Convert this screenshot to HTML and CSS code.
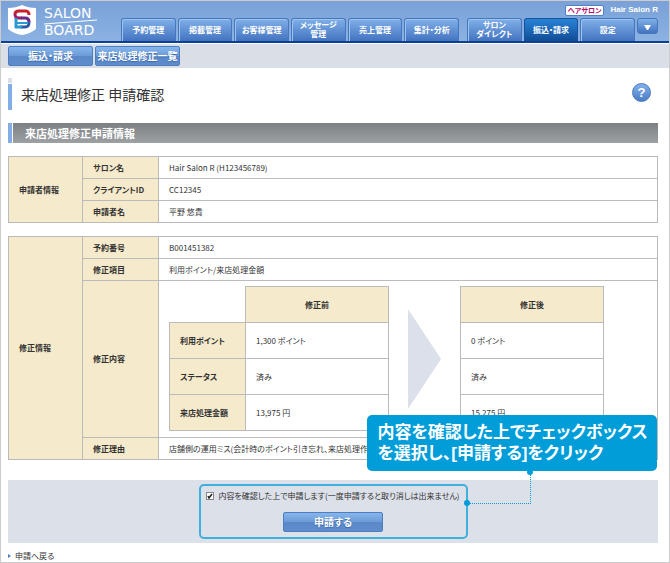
FILE: index.html
```
<!DOCTYPE html>
<html lang="ja">

<head>
    <meta charset="UTF-8">
    <meta name="viewport" content="width=device-width, initial-scale=1.0">
    <title>来店処理修正 申請確認 | SALON BOARD</title>
    <link rel="stylesheet" href="styles.css">
</head>

<body>
    <div class="page">
        <header class="header">
            <a class="logo" href="#">
                <svg class="logo-mark" width="28" height="31" viewBox="0 0 28 31" aria-hidden="true">
                    <path d="M0 3 Q8 3 14 0 Q20 3 28 3 V24 Q22 29 14 30 Q6 29 0 24 Z" fill="#fff" />
                    <g fill="none" stroke-width="3">
                        <path d="M21 10 C21 6 19 6 17 6 H11 C8 6 7 7 7 9" stroke="#c8202c" />
                        <path d="M7 9 C7 12 8 13 11 13 H14" stroke="#9c2068" />
                        <path d="M8 13 V23" stroke="#2a9bd2" />
                        <path d="M13 13 H17 C20 13 21 15 21 17" stroke="#6b2c86" />
                        <path d="M21 17 C21 21 20 22 17 22 H12" stroke="#2f56a8" />
                        <path d="M14 22 H7" stroke="#2a9bd2" />
                        <path d="M8 18 H20" stroke="#2a9bd2" stroke-width="2" />
                    </g>
                </svg>
                <span class="logo-text">
                    <span>SALON</span>
                    <svg width="53" height="6" viewBox="0 0 53 6" aria-hidden="true">
                        <path d="M0 5 L53 1" stroke="#fff" stroke-width="1" />
                    </svg>
                    <span>BOARD</span>
                </span>
            </a>
            <div class="header-main">
                <div class="account">
                    <span class="badge">ヘアサロン</span>
                    <span class="salon">Hair Salon R</span>
                </div>
                <nav class="tabs">
                    <a href="#">予約管理</a>
                    <a href="#">掲載管理</a>
                    <a href="#">お客様管理</a>
                    <a href="#">メッセージ<br>管理</a>
                    <a href="#">売上管理</a>
                    <a href="#">集計・分析</a>
                    <a class="split" href="#">サロン<br>ダイレクト</a>
                    <a class="current" href="#">振込・請求</a>
                    <a href="#">設定</a>
                    <button class="more" type="button" aria-label="メニュー">
                        <svg width="7" height="5" viewBox="0 0 7 5" aria-hidden="true">
                            <path d="M0 0 H7 L4 5 H3 Z" fill="#fff" />
                        </svg>
                    </button>
                </nav>
            </div>
        </header>

        <nav class="subnav">
            <a class="btn" href="#">振込・請求</a>
            <a class="btn" href="#">来店処理修正一覧</a>
        </nav>

        <main class="content">
            <div class="page-title">
                <h1>来店処理修正 申請確認</h1>
                <a class="help" href="#" aria-label="ヘルプ">?</a>
            </div>

            <h2>来店処理修正申請情報</h2>

            <table class="info">
                <tr>
                    <th class="group" rowspan="3">申請者情報</th>
                    <th class="item">サロン名</th>
                    <td>Hair Salon R (H123456789)</td>
                </tr>
                <tr>
                    <th>クライアントID</th>
                    <td>CC12345</td>
                </tr>
                <tr>
                    <th>申請者名</th>
                    <td>平野 悠貴</td>
                </tr>
            </table>

            <table class="info">
                <tr>
                    <th class="group" rowspan="4">修正情報</th>
                    <th class="item">予約番号</th>
                    <td>B001451382</td>
                </tr>
                <tr>
                    <th>修正項目</th>
                    <td>利用ポイント/来店処理金額</td>
                </tr>
                <tr>
                    <th>修正内容</th>
                    <td class="compare-cell">
                        <div class="compare">
                            <table class="detail">
                                <tr>
                                    <td class="blank"></td>
                                    <th class="value">修正前</th>
                                </tr>
                                <tr>
                                    <th>利用ポイント</th>
                                    <td>1,300 ポイント</td>
                                </tr>
                                <tr>
                                    <th>ステータス</th>
                                    <td>済み</td>
                                </tr>
                                <tr>
                                    <th>来店処理金額</th>
                                    <td>13,975 円</td>
                                </tr>
                            </table>
                            <svg width="33" height="100" viewBox="0 0 33 100" aria-hidden="true">
                                <path d="M0 0 L33 50 L0 100 Z" fill="#dce0ea" />
                            </svg>
                            <table class="detail">
                                <tr>
                                    <th class="value">修正後</th>
                                </tr>
                                <tr>
                                    <td>0 ポイント</td>
                                </tr>
                                <tr>
                                    <td>済み</td>
                                </tr>
                                <tr>
                                    <td>15,275 円</td>
                                </tr>
                            </table>
                        </div>
                    </td>
                </tr>
                <tr>
                    <th>修正理由</th>
                    <td>店舗側の運用ミス(会計時のポイント引き忘れ、来店処理作</td>
                </tr>
            </table>

            <form class="apply">
                <div class="apply-box">
                    <label class="confirm">
                        <input type="checkbox" checked>
                        <span>内容を確認した上で申請します(一度申請すると取り消しは出来ません)</span>
                    </label>
                    <button class="btn submit" type="button">申請する</button>
                    <span class="leader"></span>
                    <p class="note">内容を確認した上でチェックボックス<br>を選択し、[申請する]をクリック</p>
                </div>
            </form>

            <a class="back" href="#">申請へ戻る</a>
        </main>
    </div>
</body>

</html>
```
FILE: styles.css
```
* {
    box-sizing: border-box;
    margin: 0;
    padding: 0;
}

body {
    background: #fff;
    color: #333;
    font-family: "Noto Sans CJK JP", sans-serif;
    font-size: 8px;
    line-height: 12px;
    font-feature-settings: "palt";
}

a {
    color: inherit;
    text-decoration: none;
}

.page {
    border: 1px solid #ccc;
}

/* header */
.header {
    display: flex;
    height: 42px;
    padding: 0 11px 0 7px;
    border-bottom: 2px solid #0c4192;
    background: linear-gradient(#7aa1d8, #8bb2e2);
    color: #fff;
}

.logo {
    display: flex;
    gap: 8px;
    width: 113px;
    padding-top: 4px;
}

.logo-text {
    display: flex;
    flex-direction: column;
    padding-top: 3px;
    font: 14px/11px "DejaVu Sans", sans-serif;
}

.header-main {
    display: flex;
    flex: 1;
    flex-direction: column;
    justify-content: space-between;
}

.account {
    display: flex;
    align-items: center;
    justify-content: flex-end;
    gap: 6px;
    padding-top: 3px;
    font-weight: bold;
}

.salon {
    font-family: "Liberation Sans", sans-serif;
}

.badge {
    padding: 0 2px;
    border: 1px solid #4d80c4;
    border-radius: 2px;
    background: #fff;
    color: #b3106f;
    font-size: 7px;
    line-height: 9px;
}

.tabs {
    display: flex;
    gap: 2px;
    height: 23px;
}

.tabs a {
    display: flex;
    flex: 1;
    align-items: center;
    justify-content: center;
    border: 1px solid #4677bd;
    border-bottom: 0;
    border-radius: 3px 3px 0 0;
    background: linear-gradient(#80b0e8, #4373c0);
    box-shadow: inset 1px 1px #9cc4f0;
    font: bold 8px/9px "Liberation Sans", "Noto Sans CJK JP", sans-serif;
    font-feature-settings: "palt";
    text-align: center;
    white-space: nowrap;
}

.tabs .split {
    margin-left: 6px;
}

.tabs .current {
    border-color: #14549c;
    background: linear-gradient(#2a83d8, #104c94);
    box-shadow: none;
}

.more {
    width: 21px;
    height: 16px;
    border: 1px solid #4677bd;
    border-radius: 3px;
    background: linear-gradient(#80b0e8, #4373c0);
    line-height: 8px;
}

/* sub navigation */
.subnav {
    display: flex;
    gap: 2px;
    margin-top: 1px;
    padding: 2px 7px;
    background: #dadee7;
}

.btn {
    width: 85px;
    height: 20px;
    border: 1px solid #4b7fc1;
    border-radius: 2px;
    background: linear-gradient(#87b5ec, #6c9ad6 50%, #5a88c8 51%, #5f8dcc);
    color: #fff;
    font-family: inherit;
    font-feature-settings: inherit;
    font-size: 10px;
    font-weight: bold;
    line-height: 18px;
    text-align: center;
    text-shadow: 0 1px 1px #3a68a8;
    white-space: nowrap;
}

/* content */
.content {
    padding: 10px 11px 0 7px;
}

.page-title {
    display: flex;
    align-items: center;
    justify-content: space-between;
    height: 32px;
    padding: 0 7px 0 13px;
    background: linear-gradient(#dadee7 5px, #fff 5px, #fff 6px, #82aee6 6px) no-repeat left / 4px 100%;
}

h1 {
    font-size: 14px;
    font-weight: normal;
    line-height: 20px;
}

.help {
    width: 19px;
    height: 19px;
    margin-bottom: 4px;
    border: 1px solid #4878bc;
    border-radius: 50%;
    background: linear-gradient(#82b2ec, #4a7cc4);
    color: #fff;
    font: bold 13px/17px "Liberation Sans", sans-serif;
    text-align: center;
}

h2 {
    height: 20px;
    margin: 13px 0;
    padding-left: 17px;
    background: linear-gradient(90deg, #82aee6 4px, #fff 4px, #fff 5px, transparent 5px), linear-gradient(#7c8083, #9da1a4);
    color: #fff;
    font-size: 11px;
    line-height: 20px;
}

table {
    border-collapse: collapse;
}

th,
td {
    border: 1px solid #bbb;
    text-align: left;
}

th {
    background: #f6eacc;
}

.info {
    width: 100%;
    margin-bottom: 13px;
}

.info th,
.info td {
    height: 22px;
    padding: 0 10px;
}

.info .group {
    width: 74px;
}

.info .item {
    width: 76px;
}

.info .compare-cell {
    padding: 5px 10px 6px;
}

.compare {
    display: flex;
    align-items: center;
    gap: 19px;
}

.info .detail th,
.info .detail td {
    width: 76px;
    height: 36px;
    white-space: nowrap;
}

.info .detail .value {
    width: 143px;
    text-align: center;
}

.info .detail .blank {
    border-top: 0;
    border-left: 0;
}

/* apply area */
.apply {
    display: flex;
    justify-content: center;
    margin-top: 20px;
    padding: 4px;
    background: #dce0e9;
}

.apply-box {
    position: relative;
    display: flex;
    flex-direction: column;
    align-items: center;
    gap: 10px;
    width: 269px;
    padding: 4px 0 5px;
    border: 2px solid #3fb0dc;
    border-radius: 5px;
}

.confirm {
    display: flex;
    align-items: center;
    gap: 4px;
    white-space: nowrap;
}

.confirm input {
    width: 8px;
    height: 8px;
    border: 1px solid #888;
    background: #fff;
    appearance: none;
}

.confirm input:checked {
    background: #fff url("data:image/svg+xml,%3Csvg xmlns='http://www.w3.org/2000/svg' viewBox='0 0 6 6'%3E%3Cpath d='M1 3 L2 5 L5 1' fill='none' stroke='%23222' stroke-width='1.5'/%3E%3C/svg%3E");
}

.submit {
    width: 100px;
}

/* dotted line from the box up to the note */
.leader {
    position: absolute;
    right: -65px;
    bottom: 33px;
    width: 64px;
    height: 32px;
    border: 1px dotted #009dd9;
    border-width: 0 1px 1px 0;
}

.leader::before,
.leader::after {
    content: "";
    position: absolute;
    width: 6px;
    height: 6px;
    border-radius: 50%;
    background: #009dd9;
}

.leader::before {
    left: -3px;
    bottom: -3px;
}

.leader::after {
    right: -3px;
    top: -3px;
}

.note {
    position: absolute;
    left: 166px;
    bottom: 66px;
    width: 290px;
    padding: 7px 11px;
    border-radius: 5px;
    background: #009dd9;
    color: #fff;
    font: bold 17px/21px "Liberation Sans", "Noto Sans CJK JP", sans-serif;
    font-feature-settings: "palt";
    white-space: nowrap;
}

.back {
    display: flex;
    align-items: center;
    gap: 4px;
    margin-top: 7px;
}

.back::before {
    content: "";
    border: 2px solid transparent;
    border-left: 3px solid #4b7fc1;
    border-right: 0;
}
```
